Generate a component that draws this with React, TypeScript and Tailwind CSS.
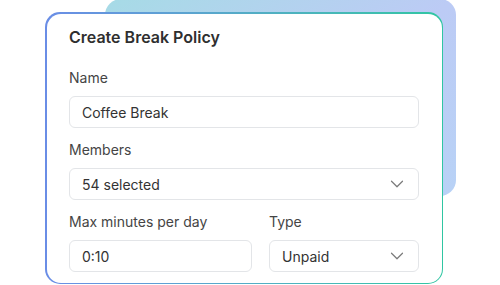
import { ChevronDown } from 'lucide-react';

function Field({ label, value, select }: { label: string; value: string; select?: boolean }) {
  return (
    <div className="flex flex-col gap-2">
      <span className="text-[14px] leading-5 text-[#454545]">{label}</span>
      <div className="flex h-8 items-center justify-between rounded-md border border-[#e3e5e8] pl-3 pr-[10px] text-[14px] text-[#333]">
        <span>{value}</span>
        {select && <ChevronDown className="h-[22px] w-[22px] text-[#7a7a7a]" strokeWidth={1.3} />}
      </div>
    </div>
  );
}

export default function App() {
  return (
    <div
      className="relative h-[285px] w-[500px] overflow-hidden bg-white"
      style={{ fontFamily: 'Inter, "Liberation Sans", sans-serif' }}
    >
      <div className="absolute left-[105px] top-[-1px] h-[197px] w-[351px] rounded-[16px] bg-gradient-to-br from-[#a6dbe6] via-[#bccbf5] to-[#b8d2f6]" />
      <div className="relative ml-[45px] mt-[12px] h-[272px] w-[398px] rounded-[15px] bg-gradient-to-r from-[#6a8de6] to-[#2fc6a2] p-[1.5px]">
        <div className="flex h-full flex-col rounded-[14px] bg-white px-[22.5px] pt-[13.5px]">
          <h1 className="text-[16px] font-semibold leading-5 text-[#2f2f2f]">Create Break Policy</h1>
          <div className="mt-[21px] flex flex-col gap-3">
            <Field label="Name" value="Coffee Break" />
            <Field label="Members" value="54 selected" select />
            <div className="flex gap-[17px]">
              <div className="w-[183px]">
                <Field label="Max minutes per day" value="0:10" />
              </div>
              <div className="flex-1">
                <Field label="Type" value="Unpaid" select />
              </div>
            </div>
          </div>
        </div>
      </div>
    </div>
  );
}
